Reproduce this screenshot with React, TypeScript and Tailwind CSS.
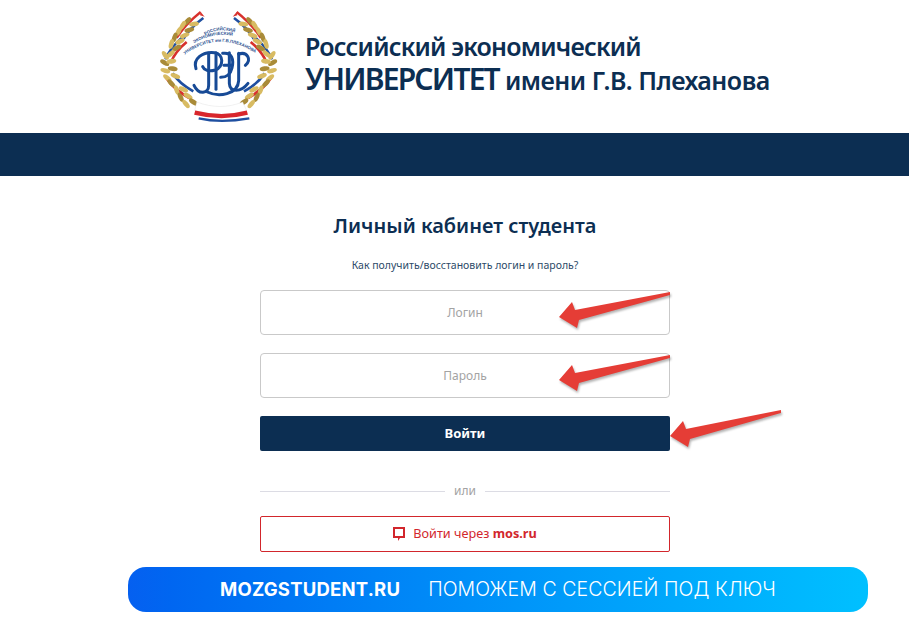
import React from 'react';

// leaf positions for one half of the wreath, mirrored for the other side
const LEAVES: [number, number, number][] = [
  [112, 58, -50], [132, 66, -10], [98, 70, -60], [118, 84, -15], [86, 88, -65], [104, 100, -20],
  [74, 106, -70], [90, 118, -25], [64, 126, -75], [80, 138, -30],
  [46, 160, 55], [62, 156, -40], [44, 182, 30], [64, 178, -10], [46, 206, 15], [68, 200, 10],
  [52, 228, 40], [76, 222, 20], [64, 244, 45],
  [80, 264, 70], [100, 262, 25], [92, 286, 65], [114, 282, 30], [108, 306, 50], [130, 300, 35],
];

const Wreath = () => (
  <g>
    {/* ribbon wound through the branch */}
    <g fill="none" strokeLinecap="butt">
      <path d="M158 36 C128 58 104 84 88 112" stroke="#fff" strokeWidth="8" />
      <path d="M160 48 C132 68 110 92 96 118" stroke="#1f4fa0" strokeWidth="8" />
      <path d="M152 30 C122 54 96 82 80 108" stroke="#d8312d" strokeWidth="7" />
      <path d="M104 112 C82 132 64 152 54 178" stroke="#fff" strokeWidth="9" />
      <path d="M96 106 C72 128 54 150 46 172" stroke="#1f4fa0" strokeWidth="7" />
      <path d="M110 120 C88 138 72 158 62 182" stroke="#d8312d" strokeWidth="8" />
      <path d="M48 226 C66 252 88 272 118 288" stroke="#d8312d" strokeWidth="9" />
      <path d="M58 220 C74 244 96 262 124 278" stroke="#fff" strokeWidth="7" />
      <path d="M68 214 C82 236 104 254 130 268" stroke="#1f4fa0" strokeWidth="8" />
    </g>
    {LEAVES.map(([x, y, r], i) => (
      <ellipse key={i} cx={x} cy={y} rx="15" ry="7" fill={i % 3 === 0 ? '#a98b38' : '#d8bb62'} transform={`rotate(${r} ${x} ${y})`} />
    ))}
    <path d="M152 30 L164 44 L150 40 Z" fill="#d8312d" />
  </g>
);

const Logo = () => (
  <svg viewBox="0 0 420 390" className="h-[130px] w-[140px] shrink-0">
    <defs>
      <path id="arc1" d="M165 100 Q205 76 250 90" />
      <path id="arc2" d="M132 124 Q205 80 280 112" />
      <path id="arc3" d="M104 158 Q205 84 314 152" />
    </defs>
    <Wreath />
    <g transform="matrix(-1 0 0 1 412 0)">
      <Wreath />
    </g>
    <path d="M140 300 C190 318 232 318 278 300 L290 326 C240 340 190 340 134 326 Z" fill="#fff" stroke="#d5d5d5" strokeWidth="1" />
    <path d="M134 332 C190 346 240 346 292 332" fill="none" stroke="#d8262c" strokeWidth="13" />
    <path d="M146 349 C190 359 240 359 298 349" fill="none" stroke="#1f4fa0" strokeWidth="7" />
    <g fontFamily="'Liberation Sans', sans-serif" fontWeight="700" fill="#2a4f8f" fontSize="13">
      <text><textPath href="#arc1">РОССИЙСКИЙ</textPath></text>
      <text fontSize="13"><textPath href="#arc2">ЭКОНОМИЧЕСКИЙ</textPath></text>
      <text fontSize="13"><textPath href="#arc3">УНИВЕРСИТЕТ им Г.В.ПЛЕХАНОВА</textPath></text>
    </g>
    <g fill="none" stroke="#174a96" strokeWidth="9" strokeLinecap="round">
      <path d="M138 200 C128 170 158 148 194 152 C222 156 222 194 196 204 C176 210 162 204 158 194" />
      <path d="M176 154 L176 250 C176 276 146 280 132 250" />
      <path d="M198 152 L198 262" />
      <path d="M218 154 C246 150 252 172 246 198 C242 216 230 226 212 226" />
      <path d="M222 190 L244 190" />
      <path d="M238 152 L238 244 C240 272 272 272 294 244" />
      <path d="M266 154 L266 236 C264 278 206 286 172 270" />
      <path d="M266 156 C292 148 306 172 286 190" />
    </g>
  </svg>
);

// screenshot arrow, drawn in its own 130x50 box
const Arrow = ({ d, className }: { d: string; className: string }) => (
  <svg className={`pointer-events-none absolute h-[50px] w-[130px] drop-shadow-[1px_2px_1px_rgba(0,0,0,0.3)] ${className}`} viewBox="0 0 130 50">
    <path d={d} fill="#e53d36" />
  </svg>
);

const App: React.FC = () => {
  return (
    <div className="relative h-[630px] w-full overflow-hidden bg-white font-['Noto_Sans','Liberation_Sans',sans-serif]">
      <header className="flex h-[133px] items-center pl-[150px]">
        <Logo />
        <div className="mb-[4px] ml-[15px] font-semibold text-[#0c2e52]">
          <div className="whitespace-nowrap text-[25px] leading-[30px] tracking-[-0.8px]">Российский экономический</div>
          <div className="whitespace-nowrap text-[25px] leading-[35px] tracking-[-0.5px]">
            <span className="text-[30px] tracking-[-1.8px]">УНИВЕРСИТЕТ</span> имени Г.В. Плеханова
          </div>
        </div>
      </header>
      <div className="h-[43px] bg-[#0c2e52]" />

      <main className="ml-[260px] w-[410px]">
        <h1 className="mt-[34px] whitespace-nowrap text-center text-[20px] leading-[32px] font-semibold text-[#0c2e52]">Личный кабинет студента</h1>
        <p className="mt-[15px] text-center text-[10.5px] leading-[16px] text-[#2d4a68]">Как получить/восстановить логин и пароль?</p>
        <div className="mt-[17px] flex h-[45px] items-center justify-center rounded-[4px] border border-[#c9c9c9] text-[12px] text-[#a3a3a3]">Логин</div>
        <div className="mt-[18px] flex h-[45px] items-center justify-center rounded-[4px] border border-[#c9c9c9] text-[12px] text-[#a3a3a3]">Пароль</div>
        <button className="mt-[18px] flex h-[35px] w-full items-center justify-center rounded-[2px] bg-[#0c2e52] text-[13px] font-bold text-white">Войти</button>
        <div className="mt-[30px] flex h-[20px] items-center gap-[9px] text-[12px] text-[#a3a3a3]">
          <span className="h-px flex-1 bg-[#dcdce4]" />
          <span>или</span>
          <span className="h-px flex-1 bg-[#dcdce4]" />
        </div>
        <button className="mt-[15px] flex h-[36px] w-full items-center justify-center gap-[8px] rounded-[2px] border border-[#d2262c] bg-white text-[12.7px] text-[#d2262c]">
          <svg viewBox="0 0 12 14" className="h-[14px] w-[12px]">
            <path d="M0 0H12V11H7L5 14V11H0Z M2 2V9H10V2Z" fill="#d2262c" fillRule="evenodd" />
          </svg>
          <span>Войти через <b className="font-bold">mos.ru</b></span>
        </button>
      </main>

      <Arrow className="left-[555px] top-[285px]" d="M4 32 L17 17 L20 25 L115 7 L115 10 L24 35 L22 43Z" />
      <Arrow className="left-[555px] top-[348px]" d="M4 32 L17 17 L20 25 L115 7 L115 10 L24 35 L22 43Z" />
      <Arrow className="left-[666px] top-[404px]" d="M4 32 L17 17 L20 25 L115 6 L115 9 L24 35 L22 43Z" />

      <div className="absolute left-[128px] top-[567px] flex h-[45px] w-[740px] items-center justify-center gap-[28px] rounded-[18px] bg-gradient-to-r from-[#0560f0] to-[#00c0ff] font-['Inter','Noto_Sans',sans-serif] text-white">
        <span className="text-[18.5px] font-bold tracking-[0.2px]">MOZGSTUDENT.RU</span>
        <span className="text-[19.5px] font-light tracking-[0.1px]">ПОМОЖЕМ С СЕССИЕЙ ПОД КЛЮЧ</span>
      </div>
    </div>
  );
};

export default App;
